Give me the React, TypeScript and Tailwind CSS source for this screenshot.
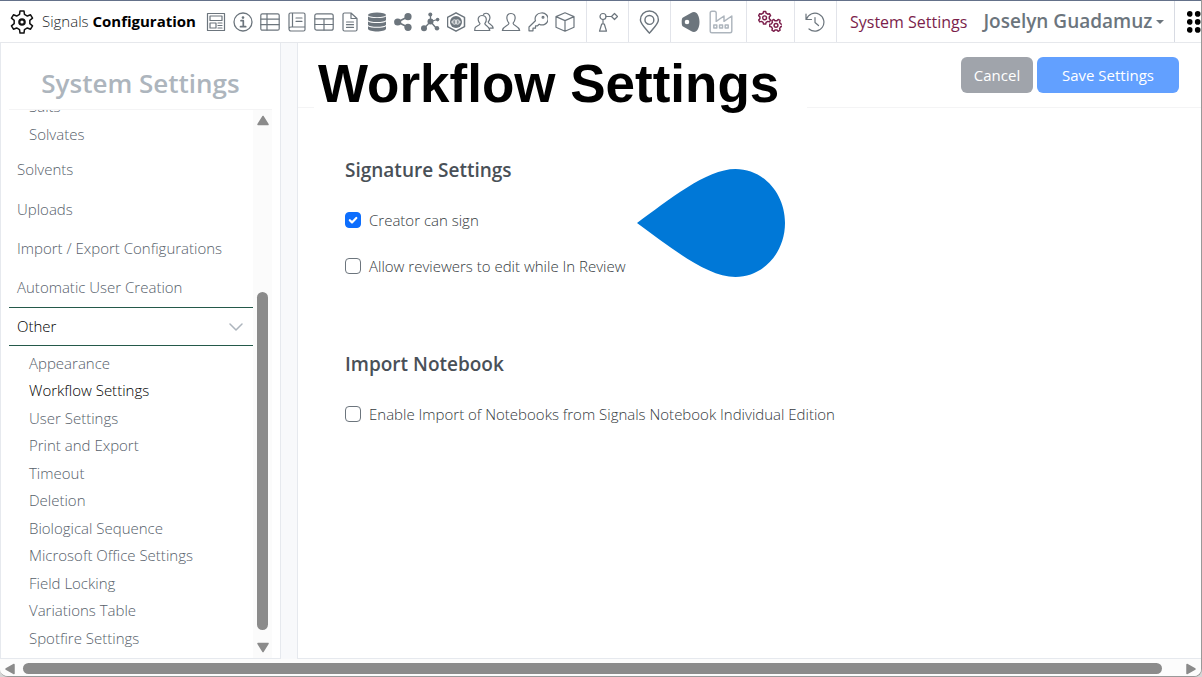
import type { ReactNode } from "react";

const FONT = "font-['Open_Sans','Noto_Sans',sans-serif]";

function Icon({ label, children, size = "size-5" }: { label: string; children: ReactNode; size?: string }) {
  return (
    <a href="#" aria-label={label} className="flex items-center justify-center">
      <svg
        viewBox="0 0 20 20"
        className={size}
        fill="none"
        stroke="currentColor"
        strokeWidth="1.2"
        strokeLinecap="round"
        strokeLinejoin="round"
        aria-hidden="true"
      >
        {children}
      </svg>
    </a>
  );
}

function gearPath(cx: number, cy: number, outer: number, inner: number, teeth: number, turn = 0) {
  const points: string[] = [];
  const step = (Math.PI * 2) / teeth;
  for (let i = 0; i < teeth; i++) {
    const a = i * step + turn;
    const corners: [number, number][] = [
      [a - step * 0.3, inner],
      [a - step * 0.17, outer],
      [a + step * 0.17, outer],
      [a + step * 0.3, inner],
    ];
    for (const [t, r] of corners) {
      points.push(`${(cx + r * Math.sin(t)).toFixed(2)} ${(cy - r * Math.cos(t)).toFixed(2)}`);
    }
  }
  return `M${points.join("L")}Z`;
}

function ToolIcons() {
  return (
    <nav aria-label="Configuration" className="grid w-[375px] shrink-0 grid-cols-14 text-[#6c757d]">
      <Icon label="Templates">
        <rect x="1.5" y="1.5" width="17" height="17" />
        <rect x="4" y="4" width="12" height="4.5" />
        <rect x="4" y="11" width="6" height="5" />
        <path d="M12 11h4M12 13.5h4M12 16h4" />
      </Icon>
      <Icon label="Information">
        <circle cx="10" cy="10" r="9" strokeWidth="1.3" />
        <path d="M8 8.7h2.3v5.8M7.5 14.7h5.2" strokeWidth="1.7" />
        <circle cx="10" cy="5.6" r="1.3" fill="currentColor" stroke="none" />
      </Icon>
      <Icon label="Tables">
        <rect x="0.8" y="1.8" width="18.4" height="16.4" rx="1.5" />
        <path d="M1 7.2h18M1 12.7h18M7 2v16" />
      </Icon>
      <Icon label="Notebooks">
        <path d="M3.500 1h13a1.500 1.500 0 0 1 1.500 1.500V15H4a2 2 0 0 0-2 1.700V2.500A1.500 1.500 0 0 1 3.500 1ZM2 16.700A2 2 0 0 0 4 19h12.500a1.500 1.500 0 0 0 1.500-1.500V15M5.500 1v14M9 6h6M9 9.300h6" />
      </Icon>
      <Icon label="Grids">
        <rect x="0.8" y="1.8" width="18.4" height="16.4" rx="2" />
        <path d="M1 6.8h18M1 12.5h18M10 7v11" />
      </Icon>
      <Icon label="Documents">
        <path d="M4.500 1h6.500L17 6.500V17.500a1.500 1.500 0 0 1-1.500 1.500h-11A1.500 1.500 0 0 1 3 17.500v-15A1.500 1.500 0 0 1 4.500 1ZM11 1v5.500h6M6.500 10h7M6.500 12.700h7M6.500 15.400h7" />
      </Icon>
      <Icon label="Data">
        <g fill="currentColor" stroke="none">
          <ellipse cx="10" cy="2.900" rx="9" ry="2.400" />
          <path d="M1 4.600c3 2 15 2 18 0v3.400c-1 2.700-17 2.700-18 0Z" />
          <path d="M1 9.500c3 2 15 2 18 0v3.200c-1 2.700-17 2.700-18 0Z" />
          <path d="M1 14.300c3 2 15 2 18 0v2.700c-1 3.300-17 3.300-18 0Z" />
        </g>
      </Icon>
      <Icon label="Sharing">
        <path d="M14 4.700 3.500 10 14 15.300" strokeWidth="1.600" />
        <g fill="currentColor" stroke="none">
          <circle cx="3.700" cy="10" r="3.600" />
          <circle cx="14" cy="4.700" r="3.600" />
          <circle cx="14" cy="15.300" r="3.600" />
        </g>
      </Icon>
      <Icon label="Molecules">
        <path d="M9.500 2.500v7L2.500 17M9.500 9.500l7-2M9.500 9.500l5.500 6.500" strokeWidth="1.300" />
        <g fill="currentColor" stroke="none">
          <circle cx="9.300" cy="2.600" r="2" />
          <circle cx="9.500" cy="9.500" r="3" />
          <circle cx="3" cy="16.300" r="3" />
          <circle cx="16.600" cy="7.600" r="1.800" />
          <circle cx="16" cy="16.300" r="2.200" />
        </g>
      </Icon>
      <Icon label="Chemistry">
        <path d="m9 .8 8.500 4.600v9.200L9 19.200.5 14.600V5.400Z" strokeWidth="1.500" />
        <circle cx="9" cy="10" r="6" fill="currentColor" stroke="none" />
        <path d="M8 7.800c-4-.4-4 4.800 0 4.400ZM10 7.800c4-.4 4 4.800 0 4.400ZM5 10h2M11 10h2" stroke="#fff" strokeWidth=".8" />
      </Icon>
      <Icon label="Groups">
        <path d="M8 3.500c-2.700 0-4.100 2-3.800 4.400.2 1.800 1 2.900 1.800 3.800-.2 2-4.200 2.100-5 4.300l-.3 2.500h15.100c0-4-4.700-4.800-5-6.800 1.200-1.300 1.600-2.700 1.500-4.500C12 5 10.500 3.500 8 3.500Z" />
        <path d="M9.500 2.300C13-.3 16.600 2.500 15.800 6.700c-.3 1.600-.9 2.500-1.600 3.300.2 2 4.300 2.300 5 6.200H16" />
      </Icon>
      <Icon label="Users">
        <path d="M10 1.500C7 1.500 5.600 3.700 5.900 6.500c.2 2 1 3.500 2 4.700-.1 2.700-5.700 2.500-6.600 7.300h17.400c-.9-4.800-6.500-4.600-6.600-7.300 1-1.200 1.800-2.700 2-4.700.3-2.800-1.100-5-4.100-5Z" />
      </Icon>
      <Icon label="Permissions">
        <path d="M13.200 1a5.900 5.900 0 0 0-5.800 7.700L1 15v3.800h4v-2.600h2.500v-2.400h2l1.700-1.600A6 6 0 1 0 13.200 1Z" />
        <circle cx="15" cy="5.200" r=".9" />
      </Icon>
      <Icon label="Inventory">
        <path d="m10 .8 9 3.800v10.600l-9 4-9-4V4.600ZM1 4.600l9 4 9-4M10 8.600v10.600" />
      </Icon>
    </nav>
  );
}

function Cell({ children, width }: { children: ReactNode; width: string }) {
  return <div className={`flex h-full shrink-0 items-center justify-center border-l border-[#e2e4ea] ${width}`}>{children}</div>;
}

function Header() {
  return (
    <header className="flex h-[43px] shrink-0 items-center border-t border-b border-t-[#64718a] border-b-[#e6e8ec] bg-white">
      <a href="#" className="flex w-[203px] shrink-0 items-center gap-2 pl-2.5 text-[15px] text-[#212529]">
        <svg viewBox="0 0 24 24" className="size-6 shrink-0" fill="none" stroke="#111" strokeLinejoin="round" aria-hidden="true">
          <path d={gearPath(12, 12, 11.2, 8, 6)} strokeWidth="1.500" />
          <circle cx="12" cy="12" r="2.700" strokeWidth="2.200" />
        </svg>
        <span className="whitespace-nowrap font-light">
          Signals <b className="font-bold text-black">Configuration</b>
        </span>
      </a>
      <ToolIcons />
      <div className="ml-2 flex h-full min-w-0 flex-1 text-[#6c757d]">
        <Cell width="w-[42px]">
          <Icon label="Workflows">
            <circle cx="5" cy="4.500" r="3" />
            <path d="M8 4.500h5M5 7.500V12M3.700 12h2.600l2.200 7.200h-7ZM16.500 1.500l3 3-3 3-3-3Z" />
          </Icon>
        </Cell>
        <Cell width="w-[42px]">
          <Icon label="Locations" size="size-6">
            <path d="M9.500 19.300C5.500 14.500 2 11.300 2 8.300a7.500 7.500 0 0 1 15 0c0 3-3.500 6.200-7.500 11Z" />
            <circle cx="9.500" cy="8.300" r="3.700" />
          </Icon>
        </Cell>
        <Cell width="w-[76px] pr-1">
          <div className="flex items-center gap-2">
            <Icon label="Materials">
              <path
                d="M13 0c-1 0-2 .4-3 1L2 5.500C1 6.200.7 7 .7 10s.3 3.800 1.300 4.500L10 19c1 .6 2 1 3 1 3 0 5.500-4 5.500-10S16 0 13 0ZM6 7.700A2.300 2.300 0 1 1 6 12.300 2.300 2.300 0 0 1 6 7.700Z"
                fill="currentColor"
                stroke="none"
                fillRule="evenodd"
              />
            </Icon>
            <span className="text-[#adb5bd]">
              <Icon label="Plants" size="size-6">
                <path d="M1 17.500v-15A1.500 1.500 0 0 1 2.500 1h2A1.500 1.500 0 0 1 6 2.500v7L12.500 5v4.500L19 5v12.500a1.500 1.500 0 0 1-1.500 1.500h-15A1.500 1.500 0 0 1 1 17.500Z" />
                <path d="M4 12.500h2.500V15H4ZM8.800 12.500h2.500V15H8.800ZM13.500 12.500H16V15h-2.500Z" />
              </Icon>
            </span>
          </div>
        </Cell>
        <Cell width="w-[48px] pr-0.5">
          <span className="text-[#7b1e4b]">
            <Icon label="System Settings" size="size-6">
              <path d={gearPath(5.500, 6.500, 5.300, 4, 6)} />
              <circle cx="5.500" cy="6.500" r="1.600" />
              <path d={gearPath(15, 12.800, 5.300, 4, 6, 0.520)} />
              <circle cx="15" cy="12.800" r="1.600" />
            </Icon>
          </span>
        </Cell>
        <Cell width="w-[42px] pr-0.5">
          <Icon label="History">
            <path d="M1 2v5.500h5.500M1.500 7A9 9 0 1 1 4 17M10 5.500v5l3.500 3" />
          </Icon>
        </Cell>
        <Cell width="pl-[13px]">
          <a href="#" className="whitespace-nowrap text-base text-[#7b1e4b]">System Settings</a>
        </Cell>
        <button type="button" className="ml-4 flex items-center gap-1 whitespace-nowrap text-[19px] font-semibold text-[#6c757d]">
          Joselyn Guadamuz
          <svg viewBox="0 0 8 4" className="h-1 w-2" fill="currentColor" aria-hidden="true">
            <path d="M0 0h8L4 4Z" />
          </svg>
        </button>
        <div className="ml-auto flex w-[27px] shrink-0 items-center justify-end border-l border-[#d8dbe3]">
          <button type="button" aria-label="Apps">
            <svg viewBox="0 0 14 22" className="h-[22px] w-3.5" fill="#000" aria-hidden="true">
              <circle cx="2.700" cy="2.900" r="2.800" />
              <circle cx="10.700" cy="2.900" r="2.800" />
              <circle cx="2.700" cy="10.900" r="2.800" />
              <circle cx="10.700" cy="10.900" r="2.800" />
              <circle cx="2.700" cy="18.900" r="2.800" />
              <circle cx="10.700" cy="18.900" r="2.800" />
            </svg>
          </button>
        </div>
      </div>
    </header>
  );
}

const sections = ["Solvents", "Uploads", "Import / Export Configurations", "Automatic User Creation"];
const otherItems = [
  "Appearance",
  "Workflow Settings",
  "User Settings",
  "Print and Export",
  "Timeout",
  "Deletion",
  "Biological Sequence",
  "Microsoft Office Settings",
  "Field Locking",
  "Variations Table",
  "Spotfire Settings",
];

function Arrow({ d, label }: { d: string; label: string }) {
  return (
    <button type="button" aria-label={label} className="shrink-0">
      <svg viewBox="0 0 12 12" className="size-3" fill="#8b8b8b" stroke="#8b8b8b" strokeWidth="1.500" strokeLinejoin="round" aria-hidden="true">
        <path d={d} />
      </svg>
    </button>
  );
}

function Sidebar() {
  return (
    <aside className="flex w-[281px] shrink-0 flex-col border-x border-b border-[#e6e9ee] bg-white px-2">
      <h2 className="flex h-[67px] shrink-0 items-center justify-center border-b border-[#f4f4f5] pt-3.5 text-[26px] leading-8 font-semibold text-[#adb5bd]">
        System Settings
      </h2>
      <div className="flex min-h-0 flex-1">
        <nav aria-label="Settings sections" className="min-w-0 flex-1 overflow-hidden text-[15px] font-light text-[#56606a]">
          <div className="-mt-[18px] mb-0.5 grid h-14 grid-rows-2 items-center pl-5">
            <a href="#">Salts</a>
            <a href="#">Solvates</a>
          </div>
          <div className="grid h-[157px] auto-rows-fr items-center pl-2">
            {sections.map((name) => (
              <a key={name} href="#" className="whitespace-nowrap">{name}</a>
            ))}
          </div>
          <button
            type="button"
            aria-expanded="true"
            className="flex h-[39px] w-full items-center justify-between border-y border-[#24594a] pr-2.5 pl-2 font-light text-black"
          >
            Other
            <svg viewBox="0 0 14 8" className="h-2 w-3.5" fill="none" stroke="#adb5bd" strokeWidth="1.500" strokeLinecap="round" strokeLinejoin="round" aria-hidden="true">
              <path d="m1 1 6 6 6-6" />
            </svg>
          </button>
          <div className="mt-[3px] grid h-[303px] auto-rows-fr items-center pl-5">
            {otherItems.map((name) => (
              <a key={name} href="#" className={name === "Workflow Settings" ? "text-black" : ""}>{name}</a>
            ))}
          </div>
        </nav>
        <div className="flex w-[19px] shrink-0 flex-col items-center bg-[#fbfbfb] py-1">
          <Arrow label="Scroll up" d="M6 2.500 11 10.500H1Z" />
          <div className="flex min-h-0 w-[11px] flex-1 flex-col pt-[166px] pb-3">
            <div className="flex-1 rounded-full bg-[#8b8b8b]" />
          </div>
          <Arrow label="Scroll down" d="M6 9.500 11 1.500H1Z" />
        </div>
      </div>
    </aside>
  );
}

function Check({ id, label, checked = false }: { id: string; label: string; checked?: boolean }) {
  return (
    <div className="flex h-6 items-center gap-2">
      <span className="grid size-4 place-items-center">
        <input
          id={id}
          type="checkbox"
          defaultChecked={checked}
          className="peer col-start-1 row-start-1 size-4 appearance-none rounded border border-[#6c757d] bg-white checked:border-[#0d6efd] checked:bg-[#0d6efd]"
        />
        <svg viewBox="0 0 16 16" className="pointer-events-none col-start-1 row-start-1 hidden size-4 peer-checked:block" fill="none" stroke="#fff" strokeWidth="2.200" strokeLinecap="round" strokeLinejoin="round" aria-hidden="true">
          <path d="m4.800 8.200 2.200 2.200 4.300-4.400" />
        </svg>
      </span>
      <label htmlFor={id} className="text-[15px] font-light text-[#343a40]">{label}</label>
    </div>
  );
}

function Main() {
  return (
    <main className="relative flex min-w-0 flex-1 flex-col border-b border-l border-[#e6e9ee] bg-white">
      <div className="flex h-[65px] shrink-0 items-start border-b border-[#f4f4f5] pl-4">
        <h1 className="relative h-[70px] bg-white pt-2 pr-7 pl-1 font-['Liberation_Sans',Arial,sans-serif] text-[53px] leading-[66px] font-bold whitespace-nowrap text-black">
          Workflow Settings
        </h1>
        <div className="mt-3.5 mr-[22px] ml-auto flex gap-1 text-[15px] font-medium text-white">
          <button type="button" className="h-9 w-[72px] rounded-md bg-[#a0a4ab]">Cancel</button>
          <button type="button" className="h-9 w-[142px] rounded-md bg-[#62a0ff]">Save Settings</button>
        </div>
      </div>
      <div className="flex flex-col gap-[72px] px-[47px] pt-12">
        <section className="flex flex-col gap-6">
          <h2 className="text-[19px] leading-7 font-semibold text-[#495057]">Signature Settings</h2>
          <div className="flex flex-col gap-[22px]">
            <Check id="creator-sign" label="Creator can sign" checked />
            <Check id="reviewer-edit" label="Allow reviewers to edit while In Review" />
          </div>
        </section>
        <section className="flex flex-col gap-6">
          <h2 className="text-[19px] leading-7 font-semibold text-[#495057]">Import Notebook</h2>
          <Check id="enable-import" label="Enable Import of Notebooks from Signals Notebook Individual Edition" />
        </section>
      </div>
      <svg viewBox="0 0 148 108" className="pointer-events-none absolute top-[126px] left-[339px] h-[108px] w-[148px]" fill="#0078d7" aria-hidden="true">
        <path d="M0 54C32 31 69 0 98.500 0 126 0 148 24 148 54s-22 54-49.500 54C69 108 32 77 0 54Z" />
      </svg>
    </main>
  );
}

export default function App() {
  return (
    <div className={`flex h-screen flex-col overflow-hidden bg-[#d5d5d5] ${FONT}`}>
      <div className="flex min-h-0 flex-1 flex-col overflow-hidden rounded-b-lg border-r border-b border-[#999] bg-[#f8f9fb]">
        <Header />
        <div className="flex min-h-0 flex-1 gap-4">
          <Sidebar />
          <Main />
        </div>
        <div className="flex h-[17px] shrink-0 items-center bg-[#fcfcfc] px-1 pt-0.5">
          <Arrow label="Scroll left" d="M2 6 10 1.500v9Z" />
          <div className="mr-[23px] ml-[7px] h-[11px] flex-1 rounded-full bg-[#8b8b8b]" />
          <Arrow label="Scroll right" d="M10 6 2 1.500v9Z" />
        </div>
      </div>
    </div>
  );
}
